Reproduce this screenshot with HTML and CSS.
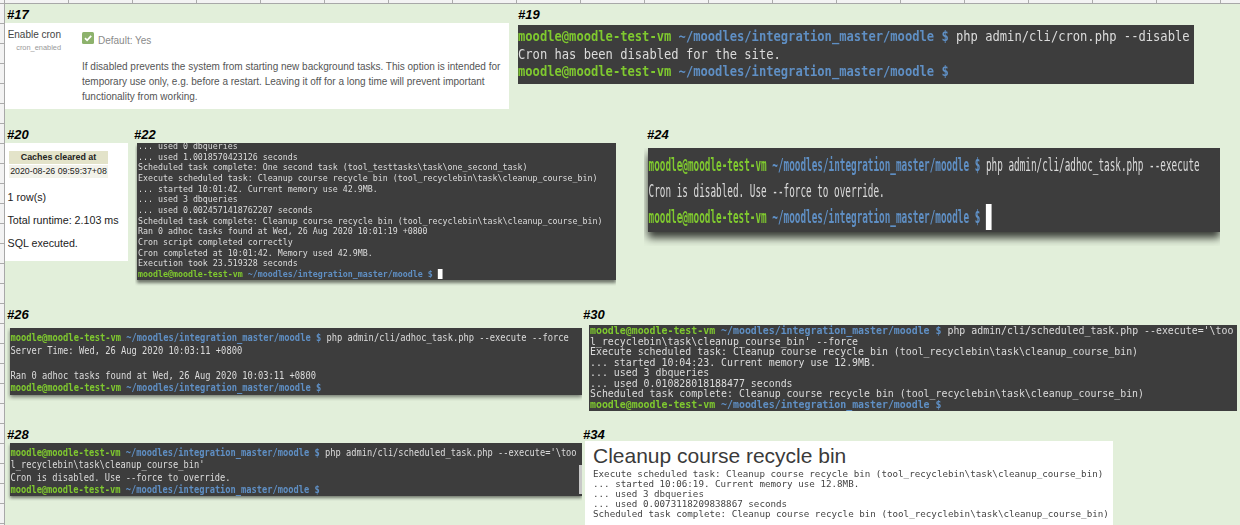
FILE: index.html
```html
<!DOCTYPE html>
<html lang="en">
<head>
<meta charset="utf-8">
<title>Cron test notes</title>
<link rel="stylesheet" href="styles.css">
</head>
<body>
<main class="sheet">
  <div class="ruler-top"></div>
  <div class="ruler-left"></div>

  <h2 class="tag tag-17">#17</h2>
  <section class="card card-17">
    <div class="setting-name">
      <div class="setting-title">Enable cron</div>
      <div class="setting-key">cron_enabled</div>
    </div>
    <div class="setting-body">
      <div class="setting-default">
        <svg class="check" viewBox="0 0 12 12" aria-hidden="true"><rect width="12" height="12" rx="1.5" fill="#8db26c"/><path d="M3 6.2 5.1 8.3 9.2 3.9" fill="none" stroke="#fff" stroke-width="1.8"/></svg>
        <span class="default-text">Default: Yes</span>
      </div>
      <p class="setting-desc">If disabled prevents the system from starting new background tasks. This option is intended for temporary use only, e.g. before a restart. Leaving it off for a long time will prevent important functionality from working.</p>
    </div>
  </section>

  <h2 class="tag tag-19">#19</h2>
  <section class="term term-19"><pre class="screen"><span class="u">moodle@moodle-test-vm</span> <span class="d">~/moodles/integration_master/moodle $</span> php admin/cli/cron.php --disable
Cron has been disabled for the site.
<span class="u">moodle@moodle-test-vm</span> <span class="d">~/moodles/integration_master/moodle $</span></pre></section>

  <h2 class="tag tag-20">#20</h2>
  <section class="card card-20">
    <table class="result">
      <thead><tr><th>Caches cleared at</th></tr></thead>
      <tbody><tr><td>2020-08-26 09:59:37+08</td></tr></tbody>
    </table>
    <p class="note">1 row(s)</p>
    <p class="note">Total runtime: 2.103 ms</p>
    <p class="note">SQL executed.</p>
  </section>

  <h2 class="tag tag-22">#22</h2>
  <section class="term term-22"><pre class="screen">... used 0 dbqueries
... used 1.0018570423126 seconds
Scheduled task complete: One second task (tool_testtasks\task\one_second_task)
Execute scheduled task: Cleanup course recycle bin (tool_recyclebin\task\cleanup_course_bin)
... started 10:01:42. Current memory use 42.9MB.
... used 3 dbqueries
... used 0.0024571418762207 seconds
Scheduled task complete: Cleanup course recycle bin (tool_recyclebin\task\cleanup_course_bin)
Ran 0 adhoc tasks found at Wed, 26 Aug 2020 10:01:19 +0800
Cron script completed correctly
Cron completed at 10:01:42. Memory used 42.9MB.
Execution took 23.519328 seconds
<span class="u">moodle@moodle-test-vm</span> <span class="d">~/moodles/integration_master/moodle $</span> <span class="cursor"></span></pre></section>

  <h2 class="tag tag-24">#24</h2>
  <section class="term term-24"><pre class="screen"><span class="u">moodle@moodle-test-vm</span> <span class="d">~/moodles/integration_master/moodle $</span> php admin/cli/adhoc_task.php --execute
Cron is disabled. Use --force to override.
<span class="u">moodle@moodle-test-vm</span> <span class="d">~/moodles/integration_master/moodle $</span> <span class="cursor"></span></pre></section>

  <h2 class="tag tag-26">#26</h2>
  <section class="term term-26"><pre class="screen"><span class="u">moodle@moodle-test-vm</span> <span class="d">~/moodles/integration_master/moodle $</span> php admin/cli/adhoc_task.php --execute --force
Server Time: Wed, 26 Aug 2020 10:03:11 +0800

Ran 0 adhoc tasks found at Wed, 26 Aug 2020 10:03:11 +0800
<span class="u">moodle@moodle-test-vm</span> <span class="d">~/moodles/integration_master/moodle $</span></pre></section>

  <h2 class="tag tag-30">#30</h2>
  <section class="term term-30"><pre class="screen"><span class="u">moodle@moodle-test-vm</span> <span class="d">~/moodles/integration_master/moodle $</span> php admin/cli/scheduled_task.php --execute='\too
l_recyclebin\task\cleanup_course_bin' --force
Execute scheduled task: Cleanup course recycle bin (tool_recyclebin\task\cleanup_course_bin)
... started 10:04:23. Current memory use 12.9MB.
... used 3 dbqueries
... used 0.010828018188477 seconds
Scheduled task complete: Cleanup course recycle bin (tool_recyclebin\task\cleanup_course_bin)
<span class="u">moodle@moodle-test-vm</span> <span class="d">~/moodles/integration_master/moodle $</span></pre></section>

  <h2 class="tag tag-28">#28</h2>
  <section class="term term-28"><pre class="screen"><span class="u">moodle@moodle-test-vm</span> <span class="d">~/moodles/integration_master/moodle $</span> php admin/cli/scheduled_task.php --execute='\too
l_recyclebin\task\cleanup_course_bin'
Cron is disabled. Use --force to override.
<span class="u">moodle@moodle-test-vm</span> <span class="d">~/moodles/integration_master/moodle $</span></pre><div class="scrollbar"></div></section>

  <h2 class="tag tag-34">#34</h2>
  <section class="card card-34">
    <h1 class="task-title">Cleanup course recycle bin</h1>
    <pre class="task-log">Execute scheduled task: Cleanup course recycle bin (tool_recyclebin\task\cleanup_course_bin)
... started 10:06:19. Current memory use 12.8MB.
... used 3 dbqueries
... used 0.0073118209838867 seconds
Scheduled task complete: Cleanup course recycle bin (tool_recyclebin\task\cleanup_course_bin)</pre>
  </section>
</main>
</body>
</html>
```
FILE: styles.css
```css
* { box-sizing: border-box; }
html, body { margin: 0; padding: 0; }
body { width: 1240px; height: 525px; overflow: hidden; }

.sheet {
  position: relative;
  width: 1240px;
  height: 525px;
  overflow: hidden;
  background: #e2efda;
  font-family: "Liberation Sans", Arial, sans-serif;
}

.ruler-top {
  position: absolute;
  left: 0;
  top: 0;
  width: 1240px;
  height: 4px;
  background-color: #f3f3f3;
  background-image: repeating-linear-gradient(to right, #ababab 0 1px, transparent 1px 64px);
  background-position: 4px 0;
  border-bottom: 1px solid #a8a8a8;
}
.ruler-left {
  position: absolute;
  left: 0;
  top: 0;
  width: 5px;
  height: 525px;
  background-color: #f3f3f3;
  background-image: repeating-linear-gradient(to bottom, #ababab 0 1px, transparent 1px 20px);
  background-position: 0 3px;
  border-right: 1px solid #a8a8a8;
}

.tag {
  position: absolute;
  margin: 0;
  font: italic bold 13px/16px "Liberation Sans", Arial, sans-serif;
  color: #000;
}
.tag-17 { left: 7px; top: 7px; }
.tag-19 { left: 518px; top: 7px; }
.tag-20 { left: 7px; top: 127px; }
.tag-22 { left: 134px; top: 127px; }
.tag-24 { left: 647px; top: 127px; }
.tag-26 { left: 7px; top: 307px; }
.tag-30 { left: 583px; top: 307px; }
.tag-28 { left: 7px; top: 427px; }
.tag-34 { left: 583px; top: 427px; }

.card { position: absolute; background: #fff; }

/* #17 settings card */
.card-17 {
  left: 5px;
  top: 23px;
  width: 504px;
  height: 86px;
  display: flex;
  color: #555;
}
.setting-name { width: 56px; flex: none; padding-top: 5px; text-align: right; white-space: nowrap; }
.setting-title { font-size: 10px; line-height: 13px; color: #444; }
.setting-key { margin-top: 2px; font-size: 7.4px; line-height: 10px; color: #999; }
.setting-body { margin-left: 21px; width: 426px; padding-top: 9px; }
.setting-default { display: flex; align-items: flex-start; height: 19px; }
.check { width: 12px; height: 12px; flex: none; }
.default-text { margin: 3px 0 0 4px; font-size: 10px; line-height: 12px; color: #8a8a8a; }
.setting-desc { margin: 8px 0 0; font-size: 10px; line-height: 15px; color: #555; }

/* #20 result card */
.card-20 {
  left: 5px;
  top: 143px;
  width: 123px;
  height: 118px;
  padding: 8px 0 0 2.5px;
  color: #222;
}
.result { border-collapse: collapse; margin: 0 0 0 1.5px; width: 99px; }
.result th {
  height: 13px;
  padding: 0;
  background: #e3e3c9;
  font-size: 8.9px;
  line-height: 13px;
  text-align: center;
  color: #222;
}
.result td {
  height: 13px;
  padding: 0;
  border-top: 1px solid #fff;
  background: #f2f2ea;
  font-size: 8.8px;
  line-height: 13px;
  text-align: center;
  white-space: nowrap;
}
.note { margin: 0 0 10.5px; font-size: 10.7px; line-height: 12.5px; }
.result + .note { margin-top: 12.5px; }

/* terminals */
.term {
  position: absolute;
  overflow: hidden;
  background: #3d3d3d;
}
.screen {
  margin: 0;
  color: #dcdcdc;
  font-family: "DejaVu Sans Mono", monospace;
  transform-origin: 0 0;
  filter: blur(0.25px);
}
.u { color: #7fc92f; font-weight: bold; }
.d { color: #5f8fc4; font-weight: bold; }
.cursor { display: inline-block; background: #fff; vertical-align: top; }

.term-19 { left: 518px; top: 25px; width: 676px; height: 59px; }
.term-19 .screen {
  padding-top: 3px;
  font-size: 14px;
  line-height: 17.7px;
  transform: scaleX(0.866);
}

.term-22 {
  left: 137px;
  top: 143px;
  width: 479px;
  height: 137px;
  box-shadow: 0 3px 3px rgba(0,0,0,.5);
  clip-path: inset(0 0 -6px -2px);
}
.term-22 .screen {
  margin-top: -2px;
  padding-left: 1px;
  font-size: 8.8px;
  line-height: 10.65px;
  transform: scaleX(0.943);
}
.term-22 .cursor { width: 5px; height: 10px; }

.term-24 {
  left: 648px;
  top: 148px;
  width: 572px;
  height: 84px;
  box-shadow: 0 6px 8px rgba(0,0,0,.75);
  clip-path: inset(0 0 -14px -4px);
}
.term-24 .screen {
  padding: 4px 0 0 1px;
  font-size: 18px;
  line-height: 26px;
  transform: scaleX(0.519);
}
.term-24 .cursor { width: 11px; height: 26px; }

.term-26 {
  left: 10px;
  top: 328px;
  width: 572px;
  height: 67px;
  box-shadow: 0 2px 4px rgba(0,0,0,.5);
  clip-path: inset(0 0 -6px -3px);
}
.term-26 .screen {
  padding: 3px 0 0 0.5px;
  font-size: 10.4px;
  line-height: 12.5px;
  transform: scaleX(0.842);
}

.term-30 { left: 589px; top: 325px; width: 648px; height: 86px; }
.term-30 .screen {
  padding: 1px 0 0 1px;
  font-size: 9.9px;
  line-height: 10.55px;
  transform: scaleX(1.002);
}

.term-28 {
  left: 10px;
  top: 443px;
  width: 572px;
  height: 53px;
  box-shadow: 0 2px 3px rgba(0,0,0,.5);
  clip-path: inset(0 0 -5px -3px);
}
.term-28 .screen {
  padding: 3px 0 0 0.5px;
  font-size: 10.4px;
  line-height: 12.35px;
  transform: scaleX(0.838);
}
.scrollbar {
  position: absolute;
  right: 0;
  top: 22px;
  width: 3.5px;
  height: 29px;
  background: #c8c8c8;
}

/* #34 page */
.card-34 {
  left: 585px;
  top: 441px;
  width: 528px;
  height: 84px;
  padding: 5px 0 0 8px;
}
.task-title {
  margin: 0;
  font-weight: 400;
  font-size: 21px;
  line-height: 20px;
  color: #3a3a3a;
}
.task-log {
  margin: 2.5px 0 0;
  font-family: "DejaVu Sans Mono", monospace;
  font-size: 8.4px;
  line-height: 10px;
  color: #444;
  transform-origin: 0 0;
  transform: scaleX(1.1);
  filter: blur(0.2px);
}
```
